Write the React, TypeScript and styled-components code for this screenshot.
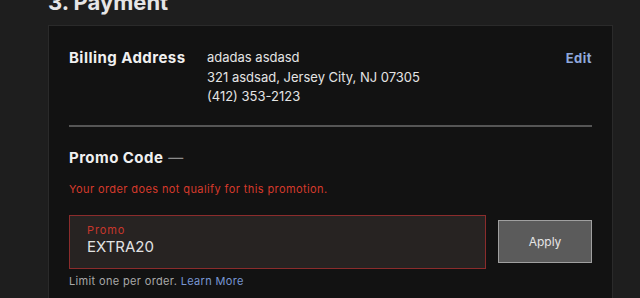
import styled, { createGlobalStyle } from 'styled-components';

const GlobalStyle = createGlobalStyle`
  html, body {
    margin: 0;
    padding: 0;
    background: #1e1e1e;
    font-family: Inter, "Open Sans", sans-serif;
    color: #e8e8e8;
    overflow: hidden;
  }
`;

const Page = styled.div`
  width: 640px;
  height: 298px;
  padding-left: 48px;
  box-sizing: border-box;
  overflow: hidden;
`;

const Heading = styled.h2`
  margin: -9px 0 12px;
  font-size: 22px;
  line-height: 22px;
  font-weight: 700;
  color: #e6e6e6;
`;

const Card = styled.section`
  width: 565px;
  box-sizing: border-box;
  background: #121212;
  border: 1px solid #2a2a2a;
  padding: 22px 20px 24px;
`;

const BillingRow = styled.div`
  display: grid;
  grid-template-columns: 138px 1fr auto;
  align-items: start;
`;

const SectionTitle = styled.h3`
  margin: 0;
  font-size: 15px;
  line-height: 20px;
  font-weight: 700;
  letter-spacing: 0.45px;
  color: #f0f0f0;
`;

const Address = styled.div`
  font-size: 13px;
  line-height: 19.5px;
  color: #e4e4e4;
`;

const EditLink = styled.a`
  font-size: 13px;
  line-height: 20px;
  font-weight: 700;
  letter-spacing: 0.5px;
  color: #8fa8dc;
  text-decoration: none;
`;

const Divider = styled.hr`
  margin: 18px 0 21px;
  border: 0;
  height: 2px;
  background: #555555;
`;

const Dash = styled.span`
  color: #8c8c8c;
  font-weight: 400;
  margin-left: 5px;
`;

const ErrorText = styled.p`
  margin: 13px 0 0;
  font-size: 11px;
  line-height: 16px;
  letter-spacing: 0.4px;
  color: #d63a2c;
`;

const PromoRow = styled.div`
  display: flex;
  align-items: center;
  gap: 12px;
  margin-top: 18px;
`;

const Field = styled.label`
  flex: 1;
  height: 54px;
  box-sizing: border-box;
  border: 1px solid #8b2c2c;
  background: #272322;
  padding: 7px 17px 0;
  display: flex;
  flex-direction: column;
`;

const FieldLabel = styled.span`
  font-size: 11px;
  line-height: 14px;
  letter-spacing: 0.9px;
  color: #c8372c;
`;

const FieldValue = styled.span`
  font-size: 15px;
  line-height: 20px;
  color: #e2e2e2;
`;

const ApplyButton = styled.button`
  width: 94px;
  height: 43px;
  background: #5b5b5b;
  border: 1px solid #a0a0a0;
  color: #e6e6e6;
  font-family: inherit;
  font-size: 12px;
`;

const Hint = styled.p`
  margin: 4px 0 0;
  font-size: 11px;
  line-height: 16px;
  letter-spacing: 0.35px;
  color: #a8a8a8;
`;

const HintLink = styled.a`
  color: #7896d2;
  text-decoration: none;
`;

export default function App() {
  return (
    <Page>
      <GlobalStyle />
      <Heading>3. Payment</Heading>
      <Card>
        <BillingRow>
          <SectionTitle>Billing Address</SectionTitle>
          <Address>
            adadas asdasd
            <br />
            321 asdsad, Jersey City, NJ 07305
            <br />
            (412) 353-2123
          </Address>
          <EditLink href="#">Edit</EditLink>
        </BillingRow>
        <Divider />
        <SectionTitle>
          Promo Code<Dash>—</Dash>
        </SectionTitle>
        <ErrorText>Your order does not qualify for this promotion.</ErrorText>
        <PromoRow>
          <Field>
            <FieldLabel>Promo</FieldLabel>
            <FieldValue>EXTRA20</FieldValue>
          </Field>
          <ApplyButton>Apply</ApplyButton>
        </PromoRow>
        <Hint>
          Limit one per order. <HintLink href="#">Learn More</HintLink>
        </Hint>
      </Card>
    </Page>
  );
}
